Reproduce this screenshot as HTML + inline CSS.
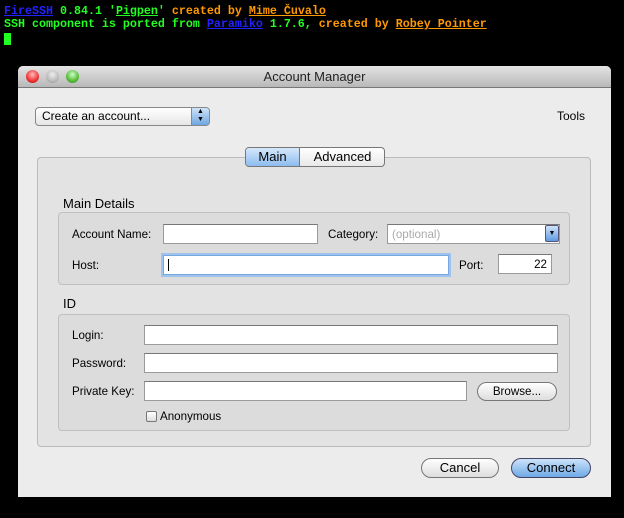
<!DOCTYPE html>
<html><head><meta charset="utf-8"><style>
*{box-sizing:border-box;margin:0;padding:0}
body{width:624px;height:518px;background:#000;position:relative;overflow:hidden;font-family:"Liberation Sans",sans-serif;font-size:12px;color:#000}
.t{position:absolute;left:4px;font-family:"Liberation Mono",monospace;font-weight:bold;font-size:11.67px;white-space:pre;line-height:13px}
.g{color:#2f2}.o{color:#f90}.b{color:#22f}.u{text-decoration:underline}
.a{position:absolute}
.win{left:18px;top:66px;width:593px;height:431px;background:#ececec;border-radius:5px 5px 0 0;overflow:hidden}
.tb{left:0;top:0;width:593px;height:22px;background:linear-gradient(#e4e4e4,#b8b8b8);border-bottom:1px solid #777;text-align:center;font-size:13px;line-height:22px;color:#222}
.dot{width:13px;height:13px;border-radius:50%;top:4px}
.in{background:#fff;border:1px solid #9a9a9a;border-top-color:#777;height:20px}
.lb{font-size:11.6px}
.btn{border:1px solid #777;border-radius:10px;background:linear-gradient(#fff,#ddd);text-align:center;font-size:13px;line-height:18px}
</style></head><body>
<div class="t" style="top:5px"><span class="b u">FireSSH</span><span class="g"> 0.84.1 '</span><span class="g u">Pigpen</span><span class="g">'</span><span class="o"> created by </span><span class="o u">Mime Čuvalo</span></div>
<div class="t" style="top:18px"><span class="g">SSH component is ported from </span><span class="b u">Paramiko</span><span class="g"> 1.7.6, </span><span class="o">created by </span><span class="o u">Robey Pointer</span></div>
<div class="a" style="left:4px;top:33px;width:7px;height:12px;background:#2f2"></div>
<div class="a win">
 <div class="a tb">Account Manager</div>
 <div class="a dot" style="left:8px;background:radial-gradient(circle at 50% 35%,#fbb,#e33 60%,#a00)"></div>
 <div class="a dot" style="left:28px;background:radial-gradient(circle at 50% 35%,#eee,#bbb 60%,#888)"></div>
 <div class="a dot" style="left:48px;background:radial-gradient(circle at 50% 35%,#cfc,#5b3 60%,#383)"></div>
 <div class="a" style="left:17px;top:41px;width:175px;height:19px;border:1px solid #888;border-radius:4px;background:linear-gradient(#fff,#e6e6e6);font-size:12px;line-height:17px;padding-left:6px">Create an account...</div>
 <div class="a" style="left:173px;top:42px;width:18px;height:17px;background:linear-gradient(#cfe3f8,#6fa6e0);border-radius:0 3px 3px 0;border-left:1px solid #888;font-size:7px;line-height:8px;text-align:center">▲<br>▼</div>
 <div class="a" style="left:539px;top:43px;font-size:12px">Tools</div>
 <div class="a" style="left:19px;top:91px;width:554px;height:290px;background:#e3e3e3;border:1px solid #bbb;border-radius:4px"></div>
 <div class="a" style="left:227px;top:81px;width:140px;height:20px;border:1px solid #777;border-radius:4px;background:linear-gradient(#fff,#e8e8e8);overflow:hidden">
  <div class="a" style="left:0;top:0;width:54px;height:18px;background:linear-gradient(#d5e8fb,#8dbcef);border-right:1px solid #777;text-align:center;font-size:13px;line-height:18px">Main</div>
  <div class="a" style="left:55px;top:0;width:83px;text-align:center;font-size:13px;line-height:18px">Advanced</div>
 </div>
 <div class="a" style="left:45px;top:130px;font-size:13px">Main Details</div>
 <div class="a" style="left:40px;top:146px;width:512px;height:73px;background:#dcdcdc;border:1px solid #c0c0c0;border-radius:4px"></div>
 <div class="a lb" style="left:54px;top:162px">Account Name:</div>
 <div class="a in" style="left:145px;top:158px;width:155px"></div>
 <div class="a lb" style="left:310px;top:162px">Category:</div>
 <div class="a in" style="left:369px;top:158px;width:173px;color:#aaa;font-size:11.6px;padding:3px 4px">(optional)</div>
 <div class="a" style="left:527px;top:159px;width:14px;height:17px;background:linear-gradient(#cfe3f8,#5f9ae0);border:1px solid #557;border-radius:2px;font-size:7px;text-align:center;line-height:16px">▼</div>
 <div class="a lb" style="left:54px;top:193px">Host:</div>
 <div class="a in" style="left:145px;top:189px;width:286px;border:1px solid #7aa7dd;box-shadow:0 0 0 2px #9ec3ee"><div class="a" style="left:4px;top:3px;width:1px;height:12px;background:#000"></div></div>
 <div class="a lb" style="left:441px;top:193px">Port:</div>
 <div class="a in" style="left:480px;top:188px;width:54px;text-align:right;padding:3px 4px;font-size:11.6px">22</div>
 <div class="a" style="left:45px;top:230px;font-size:13px">ID</div>
 <div class="a" style="left:40px;top:248px;width:512px;height:117px;background:#dcdcdc;border:1px solid #c0c0c0;border-radius:4px"></div>
 <div class="a lb" style="left:54px;top:263px">Login:</div>
 <div class="a in" style="left:126px;top:259px;width:414px"></div>
 <div class="a lb" style="left:54px;top:291px">Password:</div>
 <div class="a in" style="left:126px;top:287px;width:414px"></div>
 <div class="a lb" style="left:54px;top:319px">Private Key:</div>
 <div class="a in" style="left:126px;top:315px;width:323px"></div>
 <div class="a btn" style="left:459px;top:316px;width:80px;height:19px;font-size:11.6px;line-height:17px">Browse...</div>
 <div class="a" style="left:128px;top:345px;width:11px;height:11px;border:1px solid #777;border-radius:2px;background:linear-gradient(#fff,#ddd)"></div>
 <div class="a lb" style="left:142px;top:344px">Anonymous</div>
 <div class="a btn" style="left:403px;top:392px;width:78px;height:20px">Cancel</div>
 <div class="a btn" style="left:493px;top:392px;width:80px;height:20px;background:linear-gradient(#cde3fa,#6fa8e6);border-color:#446">Connect</div>
</div>
</body></html>
